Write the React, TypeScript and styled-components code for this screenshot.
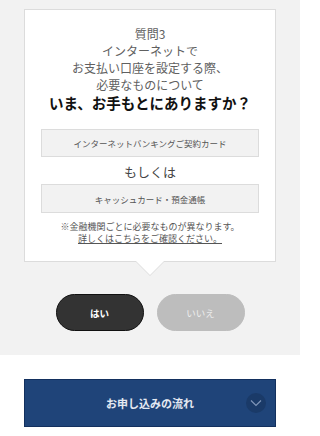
import styled, { createGlobalStyle } from 'styled-components';

const GlobalStyle = createGlobalStyle`
  html, body {
    margin: 0;
    padding: 0;
    background: #fff;
    font-family: "Noto Sans CJK JP", "Noto Sans", sans-serif;
  }
`;

const App = () => {
  return (
    <>
      <GlobalStyle />
      <Page>
        <QuestionSection>
          <QuestionCard>
            <Lead>
              質問3
              <br />
              インターネットで
              <br />
              お支払い口座を設定する際、
              <br />
              必要なものについて
            </Lead>
            <Question>いま、お手もとにありますか？</Question>
            <OptionBox first>インターネットバンキングご契約カード</OptionBox>
            <Or>もしくは</Or>
            <OptionBox>キャッシュカード・預金通帳</OptionBox>
            <Note>
              ※金融機関ごとに必要なものが異なります。
              <br />
              <NoteLink href="#">詳しくはこちらをご確認ください。</NoteLink>
            </Note>
          </QuestionCard>
          <Answers>
            <AnswerButton variant="yes">はい</AnswerButton>
            <AnswerButton variant="no">いいえ</AnswerButton>
          </Answers>
        </QuestionSection>
        <FlowBar>
          <FlowLabel>お申し込みの流れ</FlowLabel>
          <ToggleIcon>
            <svg width="12" height="8" viewBox="0 0 12 8">
              <path d="M1 1.5 L6 6.5 L11 1.5" fill="none" stroke="#7f95b8" strokeWidth="1.2" />
            </svg>
          </ToggleIcon>
        </FlowBar>
      </Page>
    </>
  );
};

const Page = styled.div`
  width: 300px;
`;

const QuestionSection = styled.section`
  background: #f2f2f2;
  padding: 9px 24px 24px;
  display: flex;
  flex-direction: column;
  align-items: stretch;
`;

const QuestionCard = styled.div`
  position: relative;
  background: #fff;
  border: 1px solid #dcdcdc;
  padding: 15px 10px 16px;
  display: flex;
  flex-direction: column;
  align-items: center;
  text-align: center;

  &::before,
  &::after {
    content: '';
    position: absolute;
    left: 50%;
    transform: translateX(-50%);
    width: 0;
    height: 0;
    border-style: solid;
  }
  &::before {
    top: 100%;
    border-width: 15px 15px 0;
    border-color: #dcdcdc transparent transparent;
  }
  &::after {
    top: calc(100% - 1px);
    border-width: 15px 15px 0;
    border-color: #fff transparent transparent;
  }
`;

const Lead = styled.p`
  margin: 0;
  font-size: 12px;
  line-height: 17px;
  color: #606060;
`;

const Question = styled.p`
  margin: 0;
  font-size: 14.5px;
  line-height: 19px;
  font-weight: 700;
  color: #111;
`;

const OptionBox = styled.div<{ first?: boolean }>`
  align-self: stretch;
  margin: ${({ first }) => (first ? '17px 6px 0' : '2px 6px 0')};
  height: ${({ first }) => (first ? '26px' : '27px')};
  display: flex;
  align-items: center;
  justify-content: center;
  background: #f2f2f2;
  border: 1px solid #dcdcdc;
  font-size: 8.5px;
  color: #555;
`;

const Or = styled.p`
  margin: 5px 0 0;
  font-size: 13px;
  line-height: 20px;
  color: #444;
`;

const Note = styled.p`
  margin: 8px 0 0;
  font-size: 9px;
  line-height: 12px;
  color: #555;
`;

const NoteLink = styled.a`
  color: #555;
  text-decoration: underline;
`;

const Answers = styled.div`
  margin-top: 32px;
  display: flex;
  justify-content: center;
  gap: 13px;
`;

const AnswerButton = styled.button<{ variant: 'yes' | 'no' }>`
  width: 88px;
  height: 37px;
  border-radius: 19px;
  font-family: inherit;
  font-size: 9.5px;
  cursor: pointer;
  border: ${({ variant }) => (variant === 'yes' ? '1.5px solid #111' : '1px solid #bdbdbd')};
  background: ${({ variant }) => (variant === 'yes' ? '#333' : '#bdbdbd')};
  color: ${({ variant }) => (variant === 'yes' ? '#fff' : '#eee')};
  font-weight: ${({ variant }) => (variant === 'yes' ? 700 : 400)};
`;

const FlowBar = styled.div`
  margin: 24px 24px 0;
  height: 46px;
  border: 1px solid #13305e;
  background: #1f4479;
  display: flex;
  align-items: center;
  justify-content: center;
  position: relative;
`;

const FlowLabel = styled.span`
  font-size: 11px;
  font-weight: 700;
  color: #e4e9f2;
`;

const ToggleIcon = styled.span`
  position: absolute;
  right: 9px;
  top: 50%;
  transform: translateY(-50%);
  width: 20px;
  height: 20px;
  border-radius: 50%;
  background: #1a3a68;
  display: flex;
  align-items: center;
  justify-content: center;
`;

export default App;
